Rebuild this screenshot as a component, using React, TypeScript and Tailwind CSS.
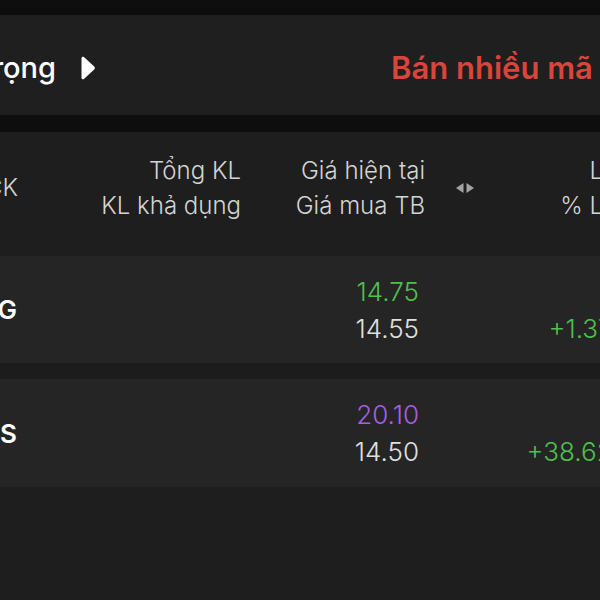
import React from "react";

type Row = {
  symbol: string;
  price: string;
  priceColor: string;
  avg: string;
  pct: string;
};

const rows: Row[] = [
  { symbol: "HAG", price: "14.75", priceColor: "text-[#4fc04c]", avg: "14.55", pct: "+1.37%" },
  { symbol: "VDS", price: "20.10", priceColor: "text-[#a65fe2]", avg: "14.50", pct: "+38.62%" },
];

const PlayIcon = () => (
  <svg width="17" height="24" viewBox="0 0 17 24" fill="none">
    <path
      d="M2.5 2.2 C2.5 0.9 3.9 0.2 4.9 1 L15.2 10.6 C16.1 11.4 16.1 12.6 15.2 13.4 L4.9 23 C3.9 23.8 2.5 23.1 2.5 21.8 Z"
      fill="#ffffff"
    />
  </svg>
);

const SortIcon = () => (
  <svg width="22" height="12" viewBox="0 0 22 12">
    <path d="M9.5 1 L9.5 11 L2 6 Z" fill="#a3a3a3" />
    <path d="M12.5 1 L12.5 11 L20 6 Z" fill="#a3a3a3" />
  </svg>
);

const App: React.FC = () => {
  return (
    <div
      className="w-[600px] h-[600px] overflow-hidden bg-[#1e1e1e] whitespace-nowrap"
      style={{ fontFamily: "Inter, 'Noto Sans', sans-serif" }}
    >
      <div className="h-[15px] bg-[#0e0e0e]" />
      {/* tabs */}
      <div className="h-[100px] bg-[#1f1f1f] flex items-center pt-[6px]">
        <div className="w-[56px] shrink-0 flex justify-end text-[29px] font-medium text-white">
          Tỷ trọng
        </div>
        <div className="ml-[23px] shrink-0 flex items-center">
          <PlayIcon />
        </div>
        <div className="ml-[295px] shrink-0 text-[31px] font-semibold text-[#d8453b]">
          Bán nhiều mã
        </div>
      </div>
      <div className="h-[17px] bg-[#0e0e0e]" />
      {/* header */}
      <div className="h-[124px] bg-[#1e1e1e] flex items-center pb-[13px] text-[24px] font-light text-[#d4d4d4] leading-[35px]">
        <div className="w-[18px] shrink-0 flex justify-end">Mã CK</div>
        <div className="w-[223px] shrink-0 flex flex-col items-end">
          <span>Tổng KL</span>
          <span>KL khả dụng</span>
        </div>
        <div className="w-[184px] shrink-0 flex flex-col items-end">
          <span>Giá hiện tại</span>
          <span>Giá mua TB</span>
        </div>
        <div className="ml-[29px] shrink-0 flex">
          <SortIcon />
        </div>
        <div className="w-[174px] shrink-0 flex flex-col items-end">
          <span>Lãi/lỗ</span>
          <span>% Lãi/lỗ</span>
        </div>
      </div>
      {/* rows */}
      {rows.map((r, i) => (
        <div key={r.symbol}>
          <div
            className={`${i === 0 ? "h-[107px]" : "h-[108px]"} bg-[#252525] flex items-center text-[26px] leading-[37px]`}
          >
            <div className="w-[17px] shrink-0 flex justify-end font-semibold text-white">
              {r.symbol}
            </div>
            <div className="w-[224px] shrink-0" />
            <div className="w-[178px] shrink-0 flex flex-col items-end font-light">
              <span className={r.priceColor}>{r.price}</span>
              <span className="text-[#e0e0e0]">{r.avg}</span>
            </div>
            <div className="w-[218px] shrink-0 flex flex-col items-end font-light text-[#4fc04c]">
              <span>&nbsp;</span>
              <span>{r.pct}</span>
            </div>
          </div>
          {i === 0 && <div className="h-[16px] bg-[#1c1c1c]" />}
        </div>
      ))}
    </div>
  );
};

export default App;
